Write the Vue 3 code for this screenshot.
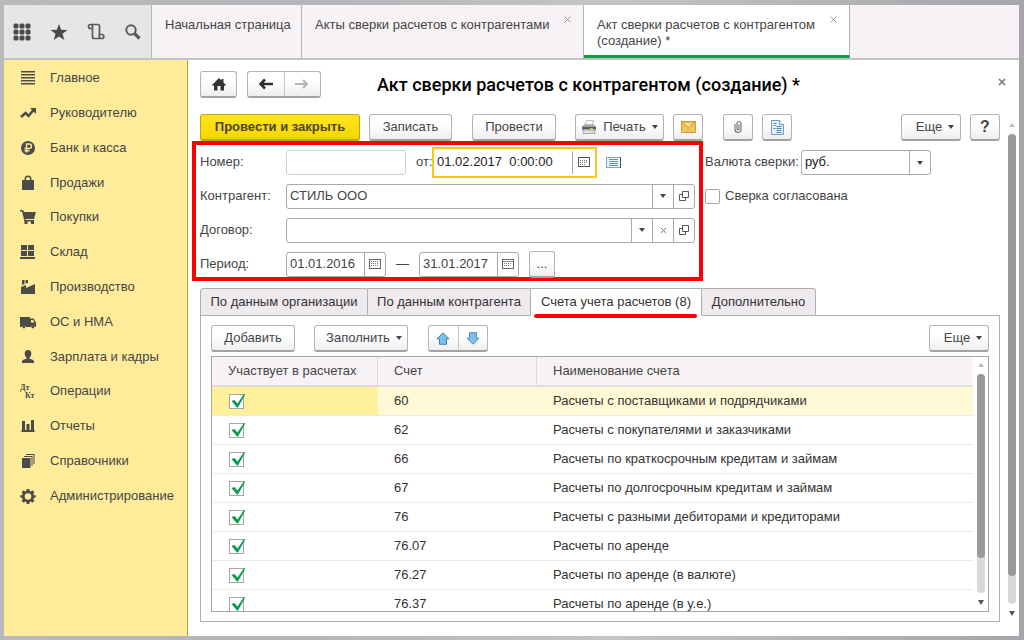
<script setup>
import { ref } from 'vue'

const sections = [
  { name: 'Главное', icon: 'lines' },
  { name: 'Руководителю', icon: 'trend' },
  { name: 'Банк и касса', icon: 'ruble' },
  { name: 'Продажи', icon: 'bag' },
  { name: 'Покупки', icon: 'cart' },
  { name: 'Склад', icon: 'stock' },
  { name: 'Производство', icon: 'factory' },
  { name: 'ОС и НМА', icon: 'truck' },
  { name: 'Зарплата и кадры', icon: 'person' },
  { name: 'Операции', icon: 'dtkt' },
  { name: 'Отчеты', icon: 'bars' },
  { name: 'Справочники', icon: 'books' },
  { name: 'Администрирование', icon: 'gear' },
]

const paths = {
  lines: 'M1 1h14v1.500H1zM1 4h14v1.500H1zM1 7h14v1.500H1zM1 10h14v1.500H1zM1 13h14v1.500H1z',
  bag: 'M2 5h2.500V4a3.500 3.500 0 0 1 7 0v1H14v10H2zM6 5h4V4a2 2 0 0 0-4 0z',
  cart: 'M0 1h3l1 2h12l-2 7H5l.5 1H14v1.500H4.500L2 2.500H0zM4.500 12.500h3V15h-3zM11 12.500h3V15h-3z',
  stock: 'M1 1h6v5H1zM8 1h6v5H8zM1 7h6v5H1zM8 7h6v5H8zM0 13h15v2H0z',
  factory: 'M1 15V8l5-2v3l9-4v10zM2 1h2.500v4L2 6zM5.500 1H8v3L5.500 4.500z',
  truck: 'M0 3h10v1.500h3.500l2.500 4V13h-1.200a2 2 0 0 0-3.900 0H6a2 2 0 0 0-3.900 0H0zM11 6v2.500h3.500L13 6zM4 11.700a1.400 1.400 0 1 1-.01 2.800 1.400 1.400 0 0 1 .01-2.800zM12.800 11.700a1.400 1.400 0 1 1-.01 2.800 1.400 1.400 0 0 1 .01-2.800z',
  person: 'M8 1c2.300 0 3.300 1.700 3.300 3.800 0 1.700-.8 3.200-1.800 4v1c2.500.5 4.500 1.200 4.500 3V14H2v-1.200c0-1.800 2-2.500 4.500-3v-1c-1-.8-1.800-2.300-1.800-4C4.700 2.700 5.700 1 8 1z',
  bars: 'M2 3h3v9h1.500V6h3v6H11V2h3v10h.5v2h-13v-2H2z',
  books: 'M2 5h8.500v10H2zM4 3h8.500v10h-1V4H4zM6 1h8.500v10h-1V2H6z',
  gear: 'M6.700 1h2.600l.4 1.900 1.200.5 1.600-1.100 1.900 1.900-1.100 1.600.5 1.200 1.900.4v2.200l-1.900.4-.5 1.200 1.100 1.600-1.900 1.900-1.600-1.100-1.200.5-.4 1.900H6.700l-.4-1.900-1.200-.5-1.600 1.100-1.900-1.900 1.100-1.600-.5-1.200L.3 9.600V7.400L2.200 7l.5-1.200-1.100-1.600 1.900-1.900 1.600 1.100 1.200-.5zM8 5.200a3.300 3.300 0 1 0 0 6.600 3.300 3.300 0 0 0 0-6.600z',
}

const rows = ref([
  { used: true, code: '60', name: 'Расчеты с поставщиками и подрядчиками' },
  { used: true, code: '62', name: 'Расчеты с покупателями и заказчиками' },
  { used: true, code: '66', name: 'Расчеты по краткосрочным кредитам и займам' },
  { used: true, code: '67', name: 'Расчеты по долгосрочным кредитам и займам' },
  { used: true, code: '76', name: 'Расчеты с разными дебиторами и кредиторами' },
  { used: true, code: '76.07', name: 'Расчеты по аренде' },
  { used: true, code: '76.27', name: 'Расчеты по аренде (в валюте)' },
  { used: true, code: '76.37', name: 'Расчеты по аренде (в у.е.)' },
])

const number = ref('')
const date = ref('01.02.2017  0:00:00')
const partner = ref('СТИЛЬ ООО')
const contract = ref('')
const from = ref('01.01.2016')
const to = ref('31.01.2017')
const agreed = ref(false)
const selected = ref(0)
</script>

<template>
  <div class="frame">
    <div class="window">
      <header class="top">
        <div class="quick">
          <button aria-label="Меню">
            <svg width="18" height="18" viewBox="0 0 18 18" fill="#4a4a4a">
              <template v-for="y in 3" :key="y">
                <rect v-for="x in 3" :key="x" :x="x * 6 - 5.500" :y="y * 6 - 5.500" width="5" height="5" rx="1.500" />
              </template>
            </svg>
          </button>
          <button aria-label="Избранное">
            <svg width="18" height="18" viewBox="0 0 18 18" fill="#4a4a4a"><path d="M9 1l2.200 5.800 6.300.2-5 3.800 1.800 6.200L9 13.400 3.700 17l1.800-6.200-5-3.800 6.300-.2z" /></svg>
          </button>
          <button aria-label="История">
            <svg width="18" height="18" viewBox="0 0 18 18" fill="none" stroke="#5a5a5a" stroke-width="1.700"><path d="M5 5.500H3.500a2 2 0 0 1 0-4H11a1.500 1.500 0 0 1 1.500 1.500v8.500h2.300a2 2 0 0 1 0 4H7.500A2 2 0 0 1 5.500 13.500V3.500a2 2 0 0 0-1-1.800M12.500 11.500c-1 1.500 0 3 1 4" /></svg>
          </button>
          <button aria-label="Поиск">
            <svg width="18" height="18" viewBox="0 0 18 18" fill="none" stroke="#5a5a5a"><circle cx="7" cy="7" r="4.700" stroke-width="2" /><path d="M10.500 10.500l5 5" stroke-width="3.200" /></svg>
          </button>
        </div>
        <nav class="pages">
          <a class="page home" href="#">Начальная страница</a>
          <div class="page acts">
            <a href="#">Акты сверки расчетов с контрагентами</a>
            <button class="shut" aria-label="Закрыть вкладку"><svg width="7" height="7" viewBox="0 0 7 7"><path d="M.5.5l6 6M6.500.5l-6 6" stroke="#999" /></svg></button>
          </div>
          <div class="page act on">
            <a href="#">Акт сверки расчетов с контрагентом (создание) *</a>
            <button class="shut" aria-label="Закрыть вкладку"><svg width="7" height="7" viewBox="0 0 7 7"><path d="M.5.5l6 6M6.500.5l-6 6" stroke="#999" /></svg></button>
          </div>
        </nav>
      </header>

      <div class="below">
        <nav class="side">
          <a v-for="s in sections" :key="s.name" href="#">
            <svg width="16" height="16" viewBox="0 0 16 16" fill="#4b4b48" fill-rule="evenodd">
              <path v-if="paths[s.icon]" :d="paths[s.icon]" />
              <g v-else-if="s.icon === 'trend'"><path d="M1 12l4.500-4 3 3L13.500 5" fill="none" stroke="#4b4b48" stroke-width="2.500" /><path d="M10 3h6v6z" /></g>
              <g v-else-if="s.icon === 'ruble'"><circle cx="8" cy="8" r="7" /><path d="M6.500 12.500V4h2.700a2.200 2.200 0 0 1 0 4.500H4.500M4.500 10.700h5" fill="none" stroke="#ffec9b" stroke-width="1.400" /></g>
              <g v-else class="dtkt"><text x="0" y="7">Дт</text><text x="5" y="15">Кт</text></g>
            </svg>
            <span>{{ s.name }}</span>
          </a>
        </nav>

        <main class="main">
          <div class="head">
            <button class="btn sq" aria-label="Домой"><svg width="16" height="14" viewBox="0 0 16 14"><path d="M8 1l2.500 2.500V2h2v3.500L15 8l-1 1-1-.8v5.300H9.500V9h-3v4.500H3V8.200L2 9 1 8z" fill="#333" /></svg></button>
            <div class="pair nav2">
              <button aria-label="Назад"><svg width="16" height="12" viewBox="0 0 16 12"><path d="M15 6H3M7 1.500L2.500 6 7 10.500" fill="none" stroke="#2e2e2e" stroke-width="2.500" /></svg></button>
              <button aria-label="Вперед"><svg width="16" height="12" viewBox="0 0 16 12"><path d="M1 6h12M9 2L13 6 9 10" fill="none" stroke="#b5b5b5" stroke-width="2" /></svg></button>
            </div>
            <h1>Акт сверки расчетов с контрагентом (создание) *</h1>
            <button class="close" aria-label="Закрыть"><svg width="8" height="8" viewBox="0 0 8 8"><path d="M1 1l6 6M7 1L1 7" stroke="#777" stroke-width="1.600" /></svg></button>
          </div>

          <div class="scrolled">
            <div class="content">
              <div class="bar">
                <button class="btn primary">Провести и закрыть</button>
                <button class="btn write">Записать</button>
                <button class="btn post">Провести</button>
                <button class="btn print">
                  <svg width="16" height="14" viewBox="0 0 16 14"><path d="M4 5l1.500-4.500h7L11.500 5z" fill="#fafafa" stroke="#bbb" /><path d="M1 6.500L3 4.500h10l2 2V11H1z" fill="#a5a5a5" /><path d="M1 7h14v2H1z" fill="#5d5d5d" /><path d="M3 10h10l1 3.500H2z" fill="#e2e2e2" stroke="#aaa" /><path d="M9 8h3v1.500H9z" fill="#e2c34a" /></svg>
                  Печать <i class="drop"></i>
                </button>
                <button class="btn icon" aria-label="Отправить"><svg width="15" height="12" viewBox="0 0 15 12"><rect x=".5" y=".5" width="14" height="11" fill="#f0bd55" stroke="#d59d35" /><path d="M1 11l5-5M14 11L9 6" fill="none" stroke="#f9dc93" /><path d="M1 1h13L7.500 6.500z" fill="#f9dc93" stroke="#c88d2b" stroke-width=".8" /></svg></button>
                <button class="btn icon clip" aria-label="Файлы"><svg width="8" height="14" viewBox="0 0 8 14"><path d="M1 4v5.500a3 3 0 0 0 6 0V3.500a2 2 0 0 0-4 0V9a1 1 0 0 0 2 0V4.500" fill="none" stroke="#777" stroke-width="1.200" /></svg></button>
                <button class="btn icon" aria-label="Отчет"><svg width="13" height="15" viewBox="0 0 13 15"><path d="M.5.5h8l4 4v10H.5z" fill="#e5f1fa" stroke="#6f9dbd" /><path d="M8.500.5v4h4" fill="#fff" stroke="#6f9dbd" /><path d="M2.500 3.500h3M2.500 5.500h2M5.500 6.500h5M2.500 8.500h2M5.500 8.500h5M5.500 10.500h5M5.500 12.500h5" stroke="#4b84ad" /></svg></button>
                <button class="btn more">Еще <i class="drop"></i></button>
                <button class="btn icon help">?</button>
              </div>

              <div class="form">
                <div class="marked">
                  <div class="line">
                    <label for="num">Номер:</label>
                    <input id="num" v-model="number" class="box num" />
                    <label for="date" class="of">от:</label>
                    <div class="box stamp">
                      <input id="date" v-model="date" />
                      <button aria-label="Календарь"><svg width="12" height="10" viewBox="0 0 12 10"><rect x=".5" y=".5" width="11" height="9" fill="#fff" stroke="#555" /><path d="M2 3.500h8M2 5.500h8M2 7.500h5" stroke="#777" stroke-dasharray="1 1" /></svg></button>
                    </div>
                    <button class="list" aria-label="Список"><svg width="15" height="11" viewBox="0 0 15 11"><rect x=".5" y=".5" width="14" height="10" fill="#eef6fc" stroke="#7fa6c4" /><path d="M3 2.500h9M3 4.500h9M3 6.500h9M3 8.500h9" stroke="#5e94bd" /><path d="M14.500 0v11" stroke="#35536b" /></svg></button>
                  </div>
                  <div class="line">
                    <label for="partner">Контрагент:</label>
                    <div class="box wide">
                      <input id="partner" v-model="partner" />
                      <button aria-label="Выбрать"><i class="drop"></i></button>
                      <button aria-label="Открыть"><svg width="10" height="10" viewBox="0 0 10 10" fill="none" stroke="#555"><path d="M3.500.5h6v6h-6zM3.500 3.500h-3v6h6v-3" /></svg></button>
                    </div>
                  </div>
                  <div class="line">
                    <label for="contract">Договор:</label>
                    <div class="box wide">
                      <input id="contract" v-model="contract" />
                      <button aria-label="Выбрать"><i class="drop"></i></button>
                      <button aria-label="Очистить"><svg width="7" height="7" viewBox="0 0 7 7"><path d="M1 1l5 5M6 1L1 6" stroke="#777" /></svg></button>
                      <button aria-label="Открыть"><svg width="10" height="10" viewBox="0 0 10 10" fill="none" stroke="#555"><path d="M3.500.5h6v6h-6zM3.500 3.500h-3v6h6v-3" /></svg></button>
                    </div>
                  </div>
                  <div class="line">
                    <label for="from">Период:</label>
                    <div class="box day">
                      <input id="from" v-model="from" />
                      <button aria-label="Календарь"><svg width="12" height="10" viewBox="0 0 12 10"><rect x=".5" y=".5" width="11" height="9" fill="#fff" stroke="#666" /><path d="M2 2.500h8M2 4.500h8M2 6.500h8" stroke="#777" stroke-dasharray="1 1" /></svg></button>
                    </div>
                    <label for="to" class="dash">—</label>
                    <div class="box day">
                      <input id="to" v-model="to" />
                      <button aria-label="Календарь"><svg width="12" height="10" viewBox="0 0 12 10"><rect x=".5" y=".5" width="11" height="9" fill="#fff" stroke="#666" /><path d="M1 2.500h10" stroke="#888" /><path d="M2 4.500h8M2 6.500h5" stroke="#777" stroke-dasharray="1 1" /></svg></button>
                    </div>
                    <button class="btn dots">...</button>
                  </div>
                </div>
                <div class="right">
                  <div class="line">
                    <label for="cur">Валюта сверки:</label>
                    <div class="box cur">
                      <select id="cur"><option>руб.</option></select>
                      <i class="drop"></i>
                    </div>
                  </div>
                  <label class="line agree"><input v-model="agreed" type="checkbox" class="tick" />Сверка согласована</label>
                </div>
              </div>

              <div class="tabs" role="tablist">
                <button role="tab" class="t1">По данным организации</button>
                <button role="tab" class="t2">По данным контрагента</button>
                <button role="tab" class="t3 on" aria-selected="true">Счета учета расчетов (8)</button>
                <button role="tab" class="t4">Дополнительно</button>
              </div>

              <section class="panel">
                <div class="bar">
                  <button class="btn add">Добавить</button>
                  <button class="btn fill">Заполнить <i class="drop"></i></button>
                  <div class="pair move">
                    <button aria-label="Вверх"><svg width="14" height="13" viewBox="0 0 14 13"><path d="M7 .8l6 6H10.500v5.500h-7V6.800H1z" fill="#7fc0ea" stroke="#3c7fae" /></svg></button>
                    <button aria-label="Вниз"><svg width="14" height="13" viewBox="0 0 14 13"><path d="M7 12.200l6-6H10.500V.7h-7v5.500H1z" fill="#7fc0ea" stroke="#4a92c4" /></svg></button>
                  </div>
                  <button class="btn more">Еще <i class="drop"></i></button>
                </div>
                <div class="grid">
                  <div class="view">
                    <table>
                      <colgroup><col class="c1" /><col class="c2" /><col /></colgroup>
                      <thead><tr><th>Участвует в расчетах</th><th>Счет</th><th>Наименование счета</th></tr></thead>
                      <tbody>
                        <tr v-for="(r, i) in rows" :key="r.code" :class="{ sel: i === selected }" @click="selected = i">
                          <td>
                            <span class="check">
                              <input v-model="r.used" type="checkbox" class="tick" :aria-label="r.name" />
                              <svg v-if="r.used" width="16" height="16" viewBox="0 0 16 16"><path d="M1.500 8l3-1 3 3.500L14 1l1.200.5L8 14.500h-1z" fill="#0b9b4c" /></svg>
                            </span>
                          </td>
                          <td>{{ r.code }}</td>
                          <td>{{ r.name }}</td>
                        </tr>
                      </tbody>
                    </table>
                  </div>
                  <div class="scroll inner"><i class="up"></i><div class="track"><div class="thumb"></div></div><i class="down"></i></div>
                </div>
              </section>
            </div>
            <div class="scroll outer"><i class="up"></i><div class="track"><div class="thumb"></div></div><i class="down"></i></div>
          </div>
        </main>
      </div>
    </div>
  </div>
</template>

<style>
body { margin: 0; }
</style>

<style scoped>
* { box-sizing: border-box; }
.frame {
  height: 100vh; min-height: 480px; padding: 5px 5px 4px 4px; overflow: hidden;
  background: linear-gradient(90deg, #b9b9b9, #b5b5ba 30%, #c4c4c4 60%, #a5a5aa);
  font: 13px/16px "Liberation Sans", Arial, sans-serif; color: #454545;
}
button, input, select { font: inherit; color: inherit; margin: 0; padding: 0; border: 0; background: none; min-width: 0; outline: 0; }
a { color: inherit; text-decoration: none; }
svg { display: block; flex: none; }
.window { height: 100%; display: flex; flex-direction: column; background: #fff; }

.top { display: flex; height: 55px; flex: none; border-bottom: 2px solid #c3c3c5; background: #f6f2f6; }
.quick { width: 148px; flex: none; display: flex; align-items: center; gap: 19px; padding-left: 9px; background: #e6e6e6; border-right: 1px solid #b5b5b5; }
.quick button { display: flex; }
.pages { display: flex; flex: 1; }
.page { display: flex; justify-content: space-between; align-items: flex-start; padding: 12px 12px 0 13px; border-right: 1px solid #b5b5b5; }
.home { width: 150px; white-space: nowrap; }
.acts { width: 282px; }
.act { width: 266px; background: #fff; border-bottom: 3px solid #0b9b42; }
.act a { width: 230px; }
.shut { display: flex; margin-top: -1px; }

.below { flex: 1; display: flex; min-height: 0; }
.side { width: 184px; flex: none; display: flex; flex-direction: column; padding: 1px 0 123px; background: #ffec9b; border-right: 1px solid #b9a23a; }
.side a { flex: 1; display: flex; align-items: center; gap: 14px; padding-left: 16px; }
.dtkt { font: bold 8px "Liberation Serif", serif; }

.main { flex: 1; min-width: 0; display: flex; flex-direction: column; padding-left: 12px; }
.head { display: flex; align-items: center; gap: 10px; height: 54px; flex: none; padding: 0 13px 5px 0; }
h1 { flex: 1; margin: 0 0 0 46px; font: 500 18px/24px Roboto, "Liberation Sans", sans-serif; color: #000; white-space: nowrap; }
.close { display: flex; margin-bottom: 6px; }
.scrolled { flex: 1; display: flex; min-height: 0; }
.content { flex: 1; min-width: 0; display: flex; flex-direction: column; padding-bottom: 14px; }

.btn, .pair { height: 27px; display: flex; align-items: center; justify-content: center; gap: 6px; border: 1px solid #b4b4b4; border-bottom: 2px solid #a2a2a2; border-radius: 3px; background: linear-gradient(#fff 40%, #efedf0); white-space: nowrap; flex: none; }
.pair { gap: 0; }
.pair button { flex: 1; height: 100%; display: flex; align-items: center; justify-content: center; }
.pair button + button { border-left: 1px solid #c4c4c4; }
.sq { width: 37px; }
.nav2 { width: 74px; }
.bar { display: flex; flex: none; gap: 9px; }
.primary { width: 160px; font-weight: bold; background: linear-gradient(#ffe620, #f8d500); border-color: #c2a514; color: #4b4620; }
.write { width: 83px; }
.post { width: 84px; margin-left: 11px; }
.print { width: 89px; margin-left: 10px; }
.icon { width: 30px; }
.clip { margin-left: 11px; }
.more { width: 60px; margin-left: auto; padding-left: 8px; }
.help { font-size: 16px; font-weight: bold; color: #444; }
.drop { width: 0; height: 0; border: 3px solid transparent; border-top: 4px solid #444; border-bottom: 0; }

.form { display: flex; flex: none; margin: 0 0 7px -8px; }
.marked { width: 511px; flex: none; display: flex; flex-direction: column; gap: 10px; padding: 5px 4px 1px; border: 4px solid #f00; }
.line { display: flex; align-items: center; height: 24px; }
.marked label:first-child { width: 86px; }
.box { display: flex; height: 25px; border: 1px solid #a9a9a9; border-radius: 3px; background: #fff; }
.box input { flex: 1; padding-left: 3px; }
.box button { width: 21px; display: flex; align-items: center; justify-content: center; border-left: 1px solid #a9a9a9; }
input.num { width: 120px; border-color: #cfcfcf; padding: 0 4px; }
.marked .of { width: 26px; padding-left: 10px; white-space: nowrap; }
.stamp { width: 165px; height: 31px; margin: -3px 0; padding: 2px 0; border: 2px solid #fbc814; border-radius: 0; white-space: pre; color: #222; }
.box.stamp button { width: 23px; }
.list { display: flex; margin-left: 9px; }
.wide { flex: 1; }
.day { width: 100px; }
.dash { width: 33px; text-align: center; }
.dots { width: 26px; margin-left: 10px; }
.right { display: flex; flex-direction: column; gap: 10px; padding: 9px 0 0 2px; }
.right label { white-space: nowrap; }
.cur { width: 130px; margin-left: 2px; position: relative; color: #222; }
.cur select { width: 100%; appearance: none; padding-left: 3px; background: linear-gradient(#a9a9a9, #a9a9a9) right 20px top 0 / 1px 100% no-repeat; }
.cur .drop { position: absolute; right: 7px; top: 10px; pointer-events: none; }
.agree { gap: 5px; }
.tick { appearance: none; width: 15px; height: 15px; flex: none; border: 1px solid #a5a5a5; border-radius: 2px; background: #fff; }

.tabs { display: flex; flex: none; margin-bottom: -1px; position: relative; z-index: 1; }
.tabs button { height: 28px; border: 1px solid #b0b0b0; border-left-width: 0; background: #eeeaee; white-space: nowrap; color: #333; }
.tabs .t1 { width: 168px; border-left-width: 1px; border-radius: 3px 0 0 0; }
.tabs .t2 { width: 163px; }
.tabs .t3 { width: 171px; background: #fff; border-bottom-color: #fff; position: relative; }
.t3::after { content: ""; position: absolute; left: 3px; right: 4px; bottom: -3px; height: 4px; border-radius: 2px; background: #f00; }
.tabs .t4 { width: 114px; border-radius: 0 3px 0 0; }
.panel { flex: 1; min-height: 0; display: flex; flex-direction: column; gap: 4px; padding: 9px 10px; border: 1px solid #b0b0b0; }
.add { width: 84px; }
.fill { width: 94px; margin-left: 10px; padding-left: 6px; }
.move { width: 60px; margin-left: 11px; }
.grid { flex: 1; min-height: 0; display: flex; border: 1px solid #a5a5a5; }
.view { flex: 1; overflow: hidden; }
table { width: 100%; border-collapse: separate; border-spacing: 0; table-layout: fixed; }
.c1 { width: 166px; }
.c2 { width: 159px; }
th { height: 30px; padding: 0 16px; font-weight: normal; text-align: left; background: #f6f2f6; border-bottom: 2px solid #e0dee0; border-right: 1px solid #dcd9dc; }
th:last-child { border-right: 0; }
td { height: 29px; padding: 0 16px; border-bottom: 1px solid #ebebeb; color: #333; }
.sel td { background: #fff9d6; }
.sel td:first-child { background: #fff09c; }
.check { display: block; position: relative; width: 16px; height: 15px; margin-left: 1px; }
.check .tick { display: block; border-radius: 0; }
.check svg { position: absolute; left: 1px; top: -1px; pointer-events: none; }
.scroll { flex: none; display: flex; flex-direction: column; align-items: center; gap: 7px; }
.inner { width: 15px; padding: 6px 0; }
.outer { width: 15px; margin-left: 4px; padding: 9px 0 20px; }
.up, .down { width: 0; height: 0; border: 3px solid transparent; }
.up { border-top: 0; border-bottom: 4px solid #bbb; }
.down { border-bottom: 0; border-top: 5px solid #555; }
.track { flex: 1; width: 8px; border-radius: 4px; background: #d8d8d8; }
.thumb { height: 84%; border-radius: 4px; background: #9b999b; }
.outer .thumb { height: 94%; }
</style>
